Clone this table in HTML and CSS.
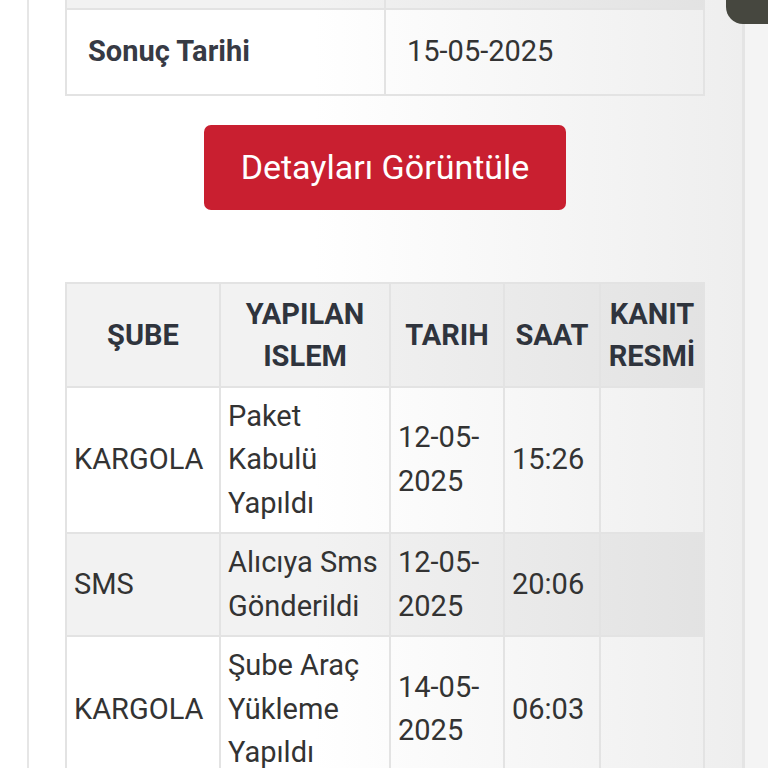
FILE: index.html
```html
<!DOCTYPE html>
<html lang="tr">
<head>
<meta charset="utf-8">
<title>Kargo Takip</title>
<link rel="stylesheet" href="styles.css">
</head>
<body>
<div class="screen">
  <div class="gutter-left"></div>
  <main class="content">
    <table class="info-table">
      <colgroup><col class="info-key"><col class="info-val"></colgroup>
      <tr class="striped stub-row"><th></th><td></td></tr>
      <tr><th>Sonuç Tarihi</th><td>15-05-2025</td></tr>
    </table>
    <div class="actions">
      <button class="btn-danger" type="button">Detayları Görüntüle</button>
    </div>
    <table class="track-table">
      <colgroup>
        <col class="c-sube"><col class="c-islem"><col class="c-tarih"><col class="c-saat"><col class="c-kanit">
      </colgroup>
      <thead>
        <tr><th>ŞUBE</th><th>YAPILAN ISLEM</th><th>TARIH</th><th>SAAT</th><th>KANIT RESMİ</th></tr>
      </thead>
      <tbody>
        <tr><td>KARGOLA</td><td>Paket Kabulü Yapıldı</td><td>12-05-2025</td><td>15:26</td><td></td></tr>
        <tr class="striped"><td>SMS</td><td>Alıcıya Sms Gönderildi</td><td>12-05-2025</td><td>20:06</td><td></td></tr>
        <tr><td>KARGOLA</td><td>Şube Araç Yükleme Yapıldı</td><td>14-05-2025</td><td>06:03</td><td></td></tr>
      </tbody>
    </table>
  </main>
  <div class="gutter-right"></div>
  <div class="corner-pill"></div>
</div>
</body>
</html>
```
FILE: styles.css
```css
* { box-sizing: border-box; }
html, body { margin: 0; padding: 0; }
body {
  width: 768px;
  height: 768px;
  overflow: hidden;
  font-family: Roboto, "Liberation Sans", Arial, sans-serif;
  background: #fff;
}
.screen {
  position: relative;
  display: flex;
  width: 768px;
  height: 768px;
  overflow: hidden;
}
.gutter-left {
  width: 29px;
  flex: none;
  background: #fff;
  border-right: 2px solid #e6e6e6;
}
.gutter-right {
  width: 28px;
  flex: none;
  background: #f4f4f4;
  border-left: 3px solid #e4e4e4;
}
.content {
  flex: 1;
  padding: 0 37px 0 36px;
  background: linear-gradient(to right, #ffffff 40%, #eeeeee 100%);
}
.corner-pill {
  position: absolute;
  top: 0;
  right: 0;
  width: 42px;
  height: 24px;
  background: #46473f;
  border-bottom-left-radius: 17px;
}

/* info table */
.info-table {
  width: 100%;
  margin-top: -2px;
  border-collapse: collapse;
  table-layout: fixed;
  font-size: 29px;
  line-height: 1.5;
  color: #3a3d46;
}
.info-key { width: 319px; }
.info-table th, .info-table td {
  border: 2px solid #e3e3e3;
  padding: 20px 21px;
  text-align: left;
  vertical-align: middle;
}
.info-table .stub-row th, .info-table .stub-row td {
  height: 10px;
  padding: 0;
  line-height: 0;
  font-size: 0;
}
.info-table th { font-weight: 700; color: #373a44; }
.info-table td { font-weight: 400; color: #333; }
.info-table .striped th, .info-table .striped td { background: rgba(0,0,0,0.05); }

/* button */
.actions {
  display: flex;
  justify-content: center;
  padding: 29px 0 72px;
}
.btn-danger {
  width: 362px;
  height: 85px;
  border: none;
  border-radius: 7px;
  background: #c91f30;
  color: #fff;
  font-family: Roboto, "Liberation Sans", Arial, sans-serif;
  font-size: 34px;
  font-weight: 400;
  padding: 0;
}

/* tracking table */
.track-table {
  width: 100%;
  border-collapse: collapse;
  table-layout: fixed;
  font-size: 29px;
  line-height: 1.5;
  color: #333;
}
.c-sube { width: 154px; }
.c-islem { width: 170px; }
.c-tarih { width: 114px; }
.c-saat { width: 96px; }
.c-kanit { width: 104px; }
.track-table th, .track-table td {
  border: 2px solid #e3e3e3;
  vertical-align: middle;
}
.track-table th {
  background: rgba(0,0,0,0.05);
  font-size: 29px;
  line-height: 42px;
  font-weight: 700;
  color: #2f343d;
  text-align: center;
  padding: 9px 2px;
}
.track-table td {
  padding: 7px 6px 7px 7px;
  text-align: left;
}
.track-table .striped td { background: rgba(0,0,0,0.05); }
```
